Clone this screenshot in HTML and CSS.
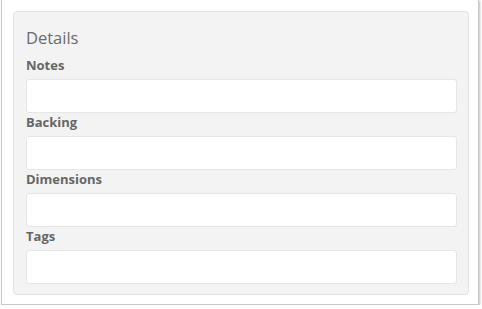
FILE: index.html
```html
<!DOCTYPE html>
<html lang="en">
<head>
    <meta charset="UTF-8">
    <title>Details</title>
    <link rel="stylesheet" href="styles.css">
</head>
<body>
    <div class="frame">
        <div class="well">
            <h4>Details</h4>

            <label for="notes">Notes</label>
            <input type="text" id="notes">

            <label for="backing">Backing</label>
            <input type="text" id="backing">

            <label for="dimensions">Dimensions</label>
            <input type="text" id="dimensions">

            <label for="tags">Tags</label>
            <input type="text" id="tags">
        </div>
    </div>
</body>
</html>
```

FILE: styles.css
```css
body {
    margin: 0;
    font-family: 'Open Sans', sans-serif;
    color: #666;
    background-color: #fff;
}

.frame {
    width: 478px;
    height: 305px;
    margin-left: 1px;
    padding: 11px 9px 0 11px;
    box-sizing: border-box;
    border: 1px solid #c8c8c8;
    border-top: none;
    box-shadow: 1px 1px 2px rgba(0, 0, 0, 0.25);
    background-color: #fff;
}

.well {
    display: flex;
    flex-direction: column;
    padding: 16px 11px 10px 12px;
    border: 1px solid #e2e2e2;
    border-radius: 4px;
    background-color: #f3f3f3;
}

h4 {
    margin: 0 0 8px;
    font-size: 16.5px;
    font-weight: normal;
    line-height: 20px;
    color: #6b6b6b;
}

label {
    display: block;
    margin-bottom: 5px;
    font-size: 13px;
    font-weight: bold;
    line-height: 18px;
}

input {
    height: 34px;
    margin: 0;
    padding: 6px 10px;
    box-sizing: border-box;
    border: 1px solid #e6e6e6;
    border-radius: 3px;
    background-color: #fff;
    font-family: inherit;
}
```
